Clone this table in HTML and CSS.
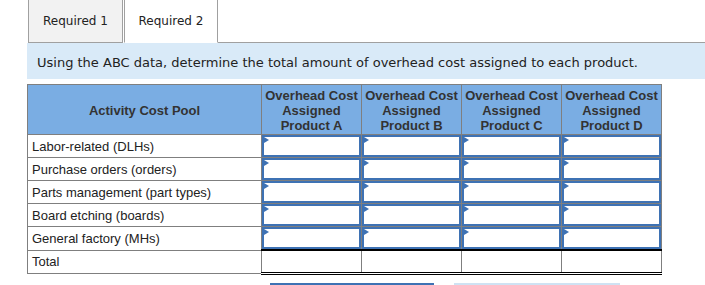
FILE: index.html
```html
<!DOCTYPE html>
<html>
<head>
<meta charset="utf-8">
<link rel="stylesheet" href="styles.css">
</head>
<body>
<div class="page">
  <div class="tabs">
    <div class="tab tab-inactive">Required 1</div>
    <div class="tab tab-active">Required 2</div>
    <div class="tab-rest"></div>
  </div>
  <div class="instr">Using the ABC data, determine the total amount of overhead cost assigned to each product.</div>
  <table class="grid">
    <thead>
      <tr>
        <th class="c-pool">Activity Cost Pool</th>
        <th class="c-prod">Overhead Cost Assigned Product A</th>
        <th class="c-prod">Overhead Cost Assigned Product B</th>
        <th class="c-prod">Overhead Cost Assigned Product C</th>
        <th class="c-prod">Overhead Cost Assigned Product D</th>
      </tr>
    </thead>
    <tbody>
      <tr>
        <td class="lbl">Labor-related (DLHs)</td>
        <td class="inp"><div class="box"><span class="tri"></span></div></td>
        <td class="inp"><div class="box"><span class="tri"></span></div></td>
        <td class="inp"><div class="box"><span class="tri"></span></div></td>
        <td class="inp"><div class="box"><span class="tri"></span></div></td>
      </tr>
      <tr>
        <td class="lbl">Purchase orders (orders)</td>
        <td class="inp"><div class="box"><span class="tri"></span></div></td>
        <td class="inp"><div class="box"><span class="tri"></span></div></td>
        <td class="inp"><div class="box"><span class="tri"></span></div></td>
        <td class="inp"><div class="box"><span class="tri"></span></div></td>
      </tr>
      <tr>
        <td class="lbl">Parts management (part types)</td>
        <td class="inp"><div class="box"><span class="tri"></span></div></td>
        <td class="inp"><div class="box"><span class="tri"></span></div></td>
        <td class="inp"><div class="box"><span class="tri"></span></div></td>
        <td class="inp"><div class="box"><span class="tri"></span></div></td>
      </tr>
      <tr>
        <td class="lbl">Board etching (boards)</td>
        <td class="inp"><div class="box"><span class="tri"></span></div></td>
        <td class="inp"><div class="box"><span class="tri"></span></div></td>
        <td class="inp"><div class="box"><span class="tri"></span></div></td>
        <td class="inp"><div class="box"><span class="tri"></span></div></td>
      </tr>
      <tr>
        <td class="lbl">General factory (MHs)</td>
        <td class="inp"><div class="box"><span class="tri"></span></div></td>
        <td class="inp"><div class="box"><span class="tri"></span></div></td>
        <td class="inp"><div class="box"><span class="tri"></span></div></td>
        <td class="inp"><div class="box"><span class="tri"></span></div></td>
      </tr>
      <tr class="total">
        <td class="lbl">Total</td>
        <td class="tot"></td>
        <td class="tot"></td>
        <td class="tot"></td>
        <td class="tot"></td>
      </tr>
    </tbody>
  </table>
  <div class="navs">
    <div class="nav nav-prev"></div>
    <div class="nav nav-next"></div>
  </div>
</div>
</body>
</html>
```

FILE: styles.css
```css
html, body {
  margin: 0;
  padding: 0;
  background: #fff;
  overflow: hidden;
}
.page {
  width: 705px;
  height: 285px;
  overflow: hidden;
  font-family: "Liberation Sans", Arial, sans-serif;
}
.tabs {
  display: flex;
  margin-top: -2px;
  height: 45px;
  padding-left: 28px;
}
.tab {
  box-sizing: border-box;
  height: 45px;
  border: 1px solid #a0a0a0;
  font-family: "DejaVu Sans", Verdana, sans-serif;
  font-size: 12px;
  color: #222;
  display: flex;
  align-items: center;
  justify-content: center;
  padding-top: 1px;
}
.tab-inactive {
  width: 95px;
  background: #f2f2f2;
}
.tab-active {
  width: 94px;
  margin-left: 1px;
  background: #fff;
  border-bottom-color: #fff;
}
.tab-rest {
  flex: 1;
  border-bottom: 1px solid #a0a0a0;
}
.instr {
  margin-left: 27px;
  height: 36px;
  background: #d9eaf8;
  font-family: "DejaVu Sans", Verdana, sans-serif;
  font-size: 13px;
  color: #222;
  display: flex;
  align-items: center;
  padding-left: 10px;
  padding-top: 2px;
  box-sizing: border-box;
}
.grid {
  margin-left: 27px;
  margin-top: 5px;
  border-collapse: collapse;
  table-layout: fixed;
  width: 635px;
}
.grid th {
  background: #7aade3;
  border: 1px solid #7f7f7f;
  font-weight: bold;
  font-size: 13px;
  line-height: 15px;
  color: #333;
  height: 50px;
  padding: 2px 0 0 0;
  box-sizing: border-box;
}
.c-pool { width: 234px; }
.c-prod { width: 100px; }
.grid td {
  height: 23px;
  padding: 0;
  border: 1px solid #7f7f7f;
  box-sizing: border-box;
}
.lbl {
  font-size: 13px;
  color: #222;
  padding-left: 4px !important;
}
.inp {
  position: relative;
}
.box {
  box-sizing: border-box;
  height: 22px;
  border: 2px solid #3e72b4;
  position: relative;
}
.tri {
  position: absolute;
  left: 0;
  top: 0;
  width: 0;
  height: 0;
  border-top: 3px solid transparent;
  border-bottom: 3px solid transparent;
  border-left: 5px solid #3e72b4;
}
.grid td.tot {
  border-top: 2px solid #000;
  border-bottom: 3px double #000;
  border-left: 1px solid #7f7f7f;
  border-right: 1px solid #7f7f7f;
}
.navs {
  display: flex;
  margin-top: 8px;
  padding-left: 270px;
  gap: 20px;
}
.nav {
  height: 10px;
  width: 164px;
  border-top: 2px solid #3e72b4;
}
.nav-next {
  width: 166px;
  border-top-color: #cfe2f3;
}
```
